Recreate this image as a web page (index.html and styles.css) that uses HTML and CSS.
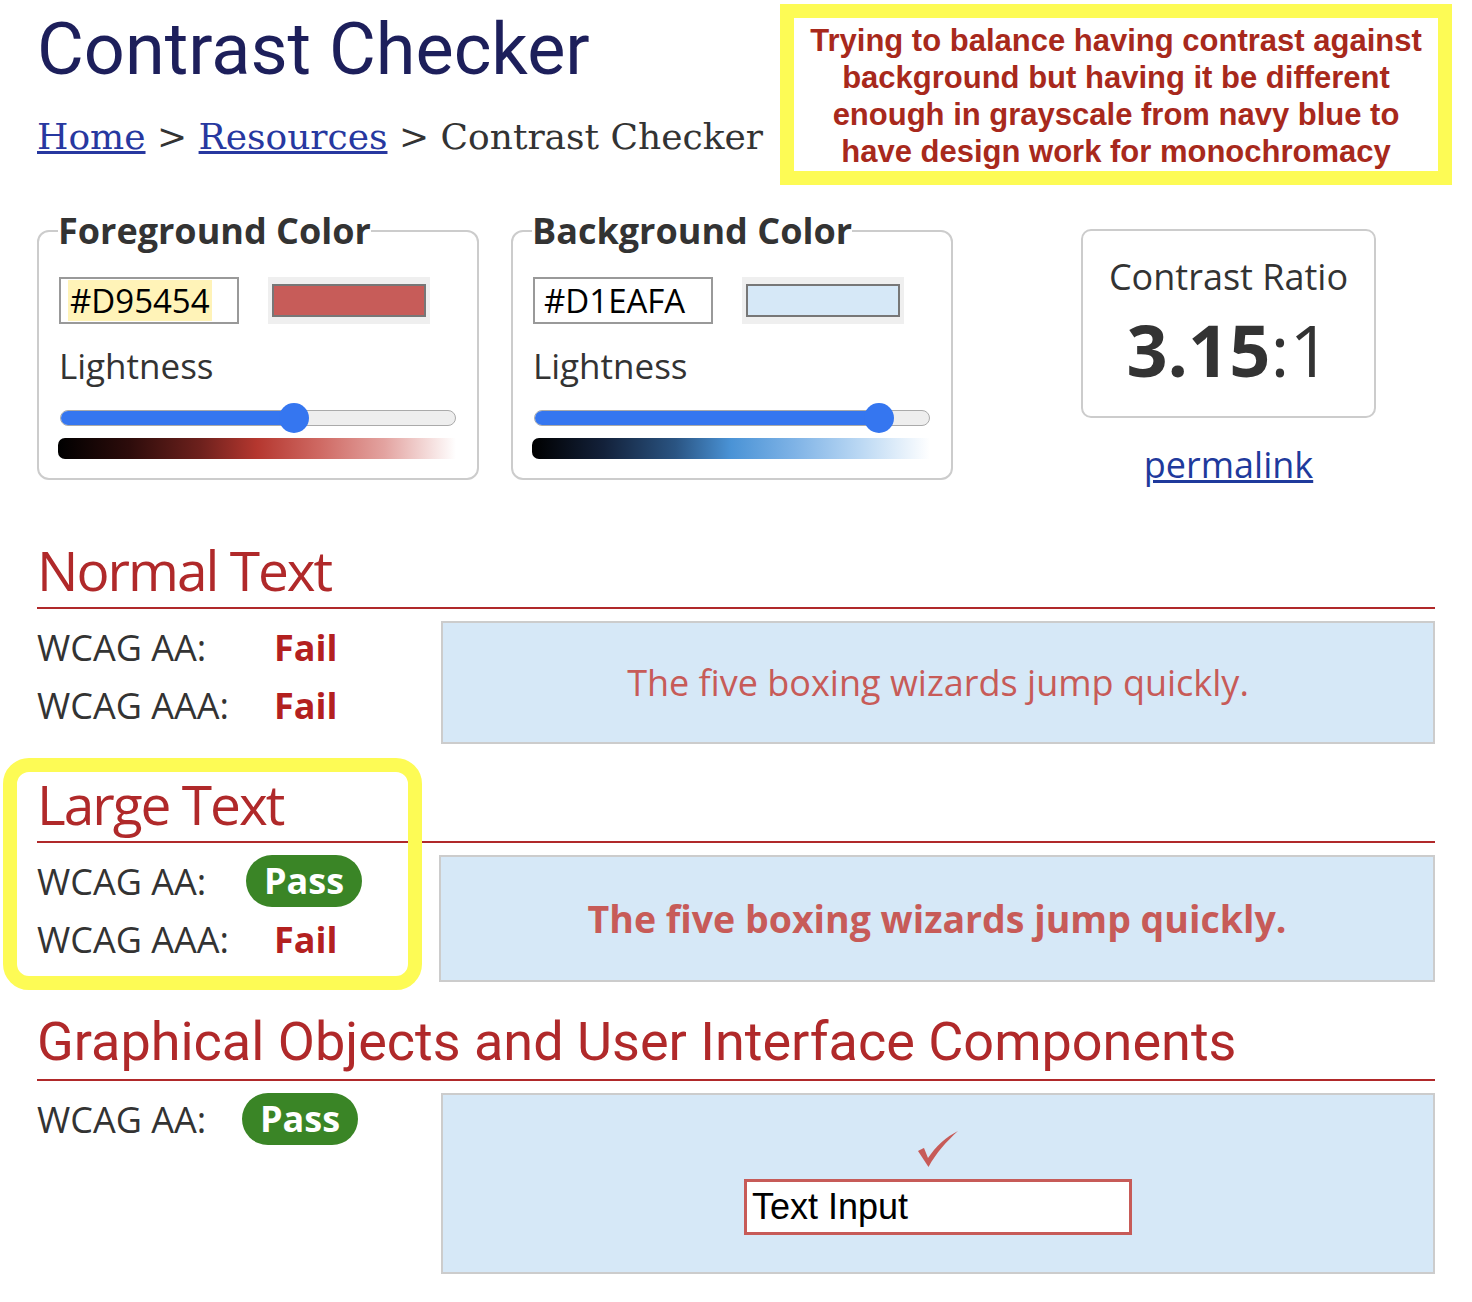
FILE: index.html
```html
<!DOCTYPE html>
<html lang="en">
<head>
<meta charset="utf-8">
<title>Contrast Checker</title>
<link rel="stylesheet" href="styles.css">
</head>
<body>
<header class="header">
  <div class="title-col">
    <h1 class="title">Contrast Checker</h1>
    <nav class="crumbs"><a href="#">Home</a> &gt; <a href="#">Resources</a> &gt; Contrast Checker</nav>
  </div>
  <div class="note">Trying to balance having contrast against background but having it be different enough in grayscale from navy blue to have design work for monochromacy</div>
</header>

<main class="page">
  <div class="controls">
    <fieldset class="picker">
      <legend>Foreground Color</legend>
      <div class="inputs">
        <div class="hex"><span class="sel">#D95454</span></div>
        <div class="swatch"><div class="swatch-inner fg"></div></div>
      </div>
      <div class="lightness">Lightness</div>
      <div class="slider">
        <div class="track"><div class="fill" style="width:59%"></div></div>
        <div class="thumb" style="left:59%"></div>
      </div>
      <div class="grad grad-fg"></div>
    </fieldset>

    <fieldset class="picker">
      <legend>Background Color</legend>
      <div class="inputs">
        <div class="hex"><span>#D1EAFA</span></div>
        <div class="swatch"><div class="swatch-inner bg"></div></div>
      </div>
      <div class="lightness">Lightness</div>
      <div class="slider">
        <div class="track"><div class="fill" style="width:87%"></div></div>
        <div class="thumb" style="left:87%"></div>
      </div>
      <div class="grad grad-bg"></div>
    </fieldset>

    <div class="ratio-col">
      <div class="ratio-box">
        <div class="ratio-label">Contrast Ratio</div>
        <div class="ratio-value"><b>3.15</b>:1</div>
      </div>
      <a class="permalink" href="#">permalink</a>
    </div>
  </div>

  <section class="result normal">
    <h2 class="sec-title">Normal Text</h2>
    <div class="result-body">
      <div class="checks">
        <div class="check"><span class="lbl">WCAG AA:</span><span class="fail">Fail</span></div>
        <div class="check"><span class="lbl">WCAG AAA:</span><span class="fail">Fail</span></div>
      </div>
      <div class="sample sample-normal">The five boxing wizards jump quickly.</div>
    </div>
  </section>

  <section class="result large">
    <div class="highlight"></div>
    <h2 class="sec-title">Large Text</h2>
    <div class="result-body">
      <div class="checks">
        <div class="check"><span class="lbl">WCAG AA:</span><span class="pass">Pass</span></div>
        <div class="check"><span class="lbl">WCAG AAA:</span><span class="fail">Fail</span></div>
      </div>
      <div class="sample sample-large">The five boxing wizards jump quickly.</div>
    </div>
  </section>

  <section class="result graphical">
    <h2 class="sec-title roboto">Graphical Objects and User Interface Components</h2>
    <div class="result-body">
      <div class="checks">
        <div class="check"><span class="lbl">WCAG AA:</span><span class="pass pass-g">Pass</span></div>
      </div>
      <div class="sample sample-ui">
        <svg class="tick" width="44" height="40" viewBox="0 0 44 40" aria-hidden="true">
          <path d="M2 22 C4.5 20.5 6.5 19.5 8 19 L12 29 C20 17 30 8 42 2 C31 12 20 24 12.5 38 Z" fill="#c75b58"/>
        </svg>
        <div class="text-input">Text Input</div>
      </div>
    </div>
  </section>
</main>
</body>
</html>
```

FILE: styles.css
```css
* { box-sizing: border-box; }

body {
  margin: 0;
  background: #ffffff;
  color: #333333;
  font-family: "Open Sans", "Noto Sans", sans-serif;
}

/* ---------- header ---------- */
.header {
  display: flex;
  justify-content: space-between;
  align-items: flex-start;
  padding: 4px 20px 0 37px;
}

.title {
  margin: 3px 0 0 0;
  font-family: Roboto, "Liberation Sans", sans-serif;
  font-weight: 400;
  font-size: 72px;
  line-height: 86px;
  color: #1d1f5b;
}

.crumbs {
  margin-top: 24px;
  font-family: "DejaVu Serif", "Liberation Serif", serif;
  font-size: 36px;
  line-height: 40px;
  color: #333333;
}

.crumbs a {
  color: #2738a0;
}

.note {
  width: 672px;
  height: 181px;
  border: 14px solid #fdfb55;
  padding: 4px 8px 0 8px;
  font-family: "Liberation Sans", Arial, sans-serif;
  font-weight: 700;
  font-size: 31px;
  line-height: 37px;
  text-align: center;
  color: #a8291c;
}

/* ---------- controls ---------- */
.page {
  padding: 0 37px 40px 37px;
}

.controls {
  display: flex;
  align-items: flex-start;
  gap: 32px;
  margin-top: 22px;
}

.picker {
  width: 442px;
  margin: 0;
  padding: 0 20px 19px 20px;
  border: 2px solid #cccccc;
  border-radius: 12px;
  min-width: 0;
}

.picker legend {
  padding: 0;
  margin-left: -1px;
  font-weight: 700;
  font-size: 36px;
  line-height: 48px;
  color: #333333;
}

.inputs {
  display: flex;
  align-items: center;
  gap: 29px;
  margin-top: 22px;
}

.hex {
  width: 180px;
  height: 47px;
  border: 2px solid #999999;
  padding: 0 0 0 7px;
  display: flex;
  align-items: center;
  font-size: 33px;
  color: #000000;
}

.hex span {
  display: inline-block;
  padding: 0 2px;
  line-height: 41px;
}

.hex .sel {
  background: #fff3b8;
}

.swatch {
  width: 162px;
  height: 47px;
  background: #efefef;
  padding: 7px 4px;
}

.swatch-inner {
  width: 100%;
  height: 100%;
  border: 2px solid #777777;
}

.swatch-inner.fg { background: #c75c59; }
.swatch-inner.bg { background: #d6e8f7; }

.lightness {
  margin-top: 20px;
  font-size: 35px;
  line-height: 44px;
  color: #333333;
}

.slider {
  position: relative;
  margin-top: 15px;
  height: 30px;
  width: 396px;
  margin-left: 1px;
}

.track {
  position: absolute;
  left: 0;
  right: 0;
  top: 7px;
  height: 16px;
  border: 1.5px solid #aaaaaa;
  border-radius: 8px;
  background: #eeeeee;
  overflow: hidden;
}

.fill {
  height: 100%;
  background: #3576f0;
}

.thumb {
  position: absolute;
  top: 0;
  width: 30px;
  height: 30px;
  margin-left: -15px;
  border-radius: 50%;
  background: #3576f0;
}

.grad {
  margin-top: 5px;
  height: 21px;
  width: 398px;
  margin-left: -1px;
  border-radius: 7px 0 0 7px;
}

.grad-fg {
  background: linear-gradient(to right, #000000 0%, #2d0c0b 18%, #6e211d 36%, #b5372f 50%, #cf6a64 66%, #e3a3a0 82%, #ffffff 100%);
}

.grad-bg {
  background: linear-gradient(to right, #000000 0%, #13213a 18%, #2a5482 36%, #4a93d6 50%, #7fb3e6 66%, #b9d7f3 82%, #ffffff 100%);
}

.ratio-col {
  margin-left: 96px;
  margin-top: 22px;
  display: flex;
  flex-direction: column;
  align-items: center;
}

.ratio-box {
  width: 295px;
  height: 189px;
  border: 2px solid #cccccc;
  border-radius: 10px;
  text-align: center;
  padding-top: 22px;
}

.ratio-label {
  font-size: 36px;
  line-height: 48px;
  color: #333333;
}

.ratio-value {
  margin-top: 3px;
  font-size: 72px;
  line-height: 90px;
  color: #333333;
}

.ratio-value b {
  font-weight: 700;
}

.permalink {
  margin-top: 23px;
  font-size: 36px;
  line-height: 48px;
  color: #1f3a9c;
}

/* ---------- results ---------- */
.result {
  position: relative;
}

.normal { margin-top: 49px; }
.large { margin-top: 28px; }
.graphical { margin-top: 28px; }

.sec-title {
  margin: 0;
  padding-bottom: 5px;
  font-weight: 400;
  font-size: 55px;
  line-height: 64px;
  letter-spacing: -2px;
  color: #b0292a;
  border-bottom: 2px solid #b0292a;
}

.sec-title.roboto {
  font-family: Roboto, "Liberation Sans", sans-serif;
  font-size: 54px;
  letter-spacing: 0;
}

.result-body {
  display: grid;
  grid-template-columns: 404px 1fr;
  margin-top: 12px;
}

.checks {
  display: flex;
  flex-direction: column;
  gap: 6px;
}

.check {
  display: flex;
  align-items: center;
  height: 52px;
  font-size: 36px;
}

.lbl {
  width: 237px;
  color: #333333;
}

.fail {
  font-weight: 700;
  color: #b3201f;
}

.pass {
  margin-left: -28px;
  height: 52px;
  padding: 0 18px;
  border-radius: 26px;
  background: #3a8526;
  color: #ffffff;
  font-weight: 700;
  line-height: 52px;
}

.pass-g {
  margin-left: -32px;
}

.sample {
  background: #d6e8f7;
  border: 2px solid #cccccc;
  display: flex;
  align-items: center;
  justify-content: center;
  color: #c75b58;
}

.sample-normal {
  height: 123px;
  font-size: 36px;
}

.sample-large {
  height: 127px;
  margin-left: -2px;
  font-size: 37.5px;
  font-weight: 700;
}

.sample-ui {
  height: 181px;
  flex-direction: column;
  gap: 10px;
  padding-bottom: 4px;
}

.tick {
  display: block;
}

.text-input {
  width: 388px;
  height: 56px;
  border: 3px solid #c75b58;
  background: #ffffff;
  padding: 0 5px;
  font-family: "Liberation Sans", Arial, sans-serif;
  font-size: 36px;
  line-height: 50px;
  color: #000000;
}

.highlight {
  position: absolute;
  left: -34px;
  top: -14px;
  width: 419px;
  height: 232px;
  border: 14px solid #fdfb55;
  border-radius: 26px;
  pointer-events: none;
}
```
